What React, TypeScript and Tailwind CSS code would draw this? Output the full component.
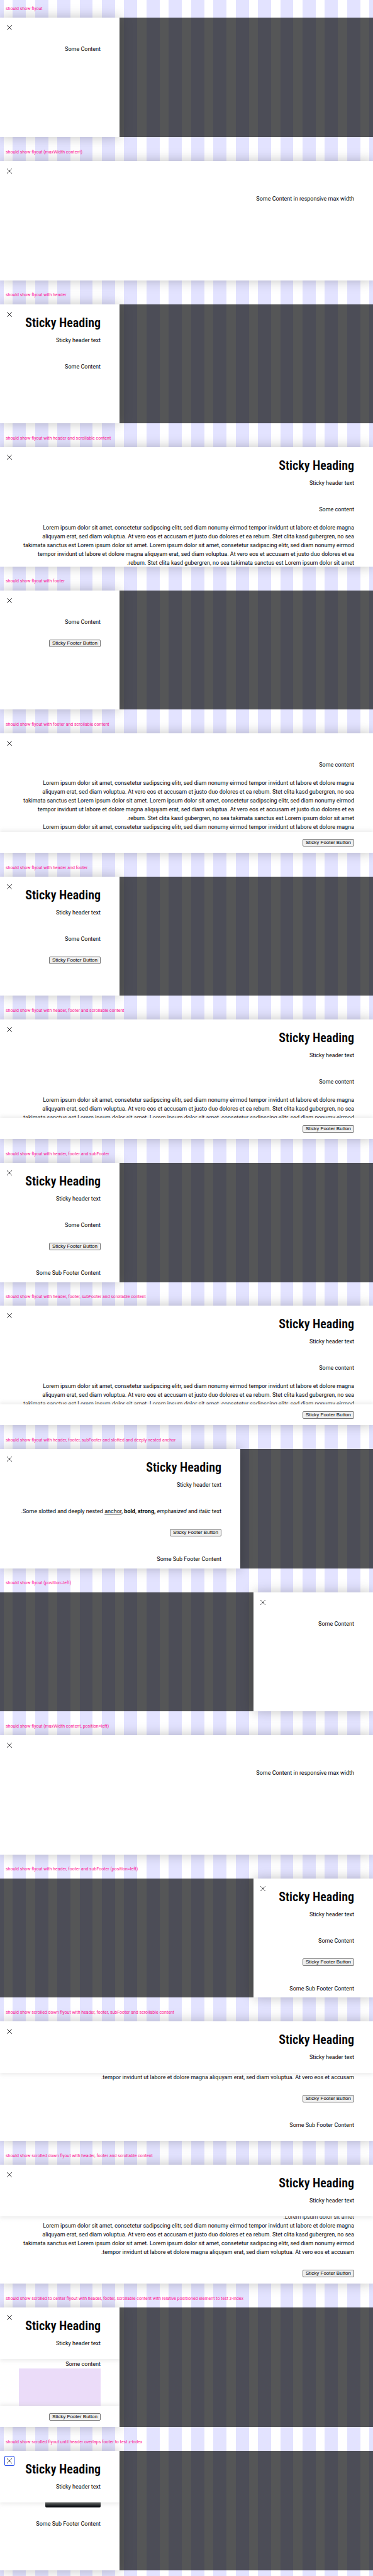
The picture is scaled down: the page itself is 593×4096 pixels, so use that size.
import type { ReactNode } from "react";
import clsx from "clsx";

type FlyoutProps = {
  label: string;
  size?: "default" | "fit" | "max";
  position?: "start" | "end";
  focused?: boolean;
  children: ReactNode;
};

function Flyout({ label, size = "default", position = "end", focused = false, children }: FlyoutProps) {
  return (
    <section className="flex min-h-[227px] flex-col">
      <h2 className="flex min-h-0 grow-[3] basis-0 items-center px-[9px] text-[7px] leading-[8px] whitespace-nowrap text-[#ff1493]">
        {label}
      </h2>
      <div
        dir="rtl"
        className={clsx(
          "flex min-h-0 grow-[20] basis-0 bg-[#020304]/67",
          position === "end" ? "justify-end" : "justify-start",
        )}
      >
        <div
          role="dialog"
          aria-label={label}
          className={clsx(
            "relative flex flex-col overflow-hidden bg-white text-[9px] leading-[14px] text-[#010205] shadow-[0_0_18px_rgba(0,0,0,0.25)]",
            size === "default" && "w-[190px]",
            size === "fit" && "w-fit max-w-full min-w-[382px]",
            size === "max" && "w-full",
          )}
        >
          <button
            type="button"
            aria-label="Close"
            className={clsx(
              "absolute top-2 left-[7px] z-20 flex size-4 items-center justify-center rounded-[2px] border",
              focused ? "border-[#1a44ea]" : "border-transparent",
            )}
          >
            <svg viewBox="0 0 14 14" className="size-2 shrink-0" fill="none" stroke="#010205" strokeWidth="1.3">
              <path d="M0.2 0.2 13.8 13.8M13.8 0.2 0.2 13.8" />
            </svg>
          </button>
          {children}
        </div>
      </div>
      <div className="grow basis-0" />
    </section>
  );
}

function Header({ stuck = false }: { stuck?: boolean }) {
  return (
    <header
      className={clsx(
        "relative z-10 shrink-0 bg-white px-[30px] pt-[17px] pb-[18px]",
        stuck && "shadow-[0_3px_6px_rgba(204,204,204,0.35)]",
      )}
    >
      <h3 className="font-['Roboto_Condensed',Roboto,sans-serif] text-[20px] leading-6 font-semibold">Sticky Heading</h3>
      <p className="mt-[9px]">Sticky header text</p>
    </header>
  );
}

function Body({ headless = false, children }: { headless?: boolean; children: ReactNode }) {
  return <div className={clsx("shrink-0 px-[30px] pb-[10px]", headless ? "pt-[43px]" : "pt-[10px]")}>{children}</div>;
}

function Viewport({ atEnd = false, children }: { atEnd?: boolean; children: ReactNode }) {
  return (
    <div className={clsx("flex min-h-0 grow basis-0 flex-col overflow-hidden", atEnd && "justify-end")}>{children}</div>
  );
}

function Footer({ stuck = false }: { stuck?: boolean }) {
  return (
    <footer
      className={clsx(
        "relative z-10 flex shrink-0 bg-white px-[30px] pt-[11px] pb-[10px]",
        stuck && "shadow-[0_-3px_6px_rgba(204,204,204,0.35)]",
      )}
    >
      <button
        type="button"
        className="flex h-3 items-center rounded-[2px] border border-[#767676] bg-[#efefef] px-1 font-['Liberation_Sans',sans-serif] text-[8px] leading-[10px] whitespace-nowrap text-black"
      >
        Sticky Footer Button
      </button>
    </footer>
  );
}

function EmptyFooter() {
  return <div className="relative z-10 h-0 shrink-0 shadow-[0_-1px_6px_rgba(160,160,160,0.5)]" />;
}

function SubFooter() {
  return <div className="shrink-0 px-[30px] pt-[19px] pb-[18px]">Some Sub Footer Content</div>;
}

function Lines({ lines }: { lines: string[] }) {
  return (
    <>
      {lines.map((line) => (
        <span key={line} className="block whitespace-nowrap">
          {line}
        </span>
      ))}
    </>
  );
}

const opening = [
  "Lorem ipsum dolor sit amet, consetetur sadipscing elitr, sed diam nonumy eirmod tempor invidunt ut labore et dolore magna",
  "aliquyam erat, sed diam voluptua. At vero eos et accusam et justo duo dolores et ea rebum. Stet clita kasd gubergren, no sea",
  "takimata sanctus est Lorem ipsum dolor sit amet. Lorem ipsum dolor sit amet, consetetur sadipscing elitr, sed diam nonumy eirmod",
];

const paragraph = [
  ...opening,
  "tempor invidunt ut labore et dolore magna aliquyam erat, sed diam voluptua. At vero eos et accusam et justo duo dolores et ea",
  "rebum. Stet clita kasd gubergren, no sea takimata sanctus est Lorem ipsum dolor sit amet.",
];

const closing = [...opening, "tempor invidunt ut labore et dolore magna aliquyam erat, sed diam voluptua. At vero eos et accusam."];

function LongContent({ paragraphs }: { paragraphs: string[][] }) {
  return (
    <>
      <p className="mb-[15px]">Some content</p>
      {paragraphs.map((lines, index) => (
        <p key={index}>
          <Lines lines={lines} />
        </p>
      ))}
    </>
  );
}

function ClosingContent() {
  return (
    <p>
      <Lines lines={["Lorem ipsum dolor sit amet."]} />
      <Lines lines={closing} />
    </p>
  );
}

function MaxWidthContent() {
  return (
    <>
      <Viewport>
        <Body headless>
          <p className="pt-[10px]">Some Content in responsive max width</p>
        </Body>
      </Viewport>
      <EmptyFooter />
    </>
  );
}

export default function App() {
  return (
    <main className="grid min-h-screen auto-rows-fr overflow-hidden bg-white bg-[repeating-linear-gradient(to_right,#e3e3ff_0,#e3e3ff_0.95%,#ffffff_0.95%,#ffffff_3.4%,#e3e3ff_3.4%,#e3e3ff_5.978%)] font-[Roboto,sans-serif]">
      <Flyout label="should show flyout">
        <Body headless>Some Content</Body>
      </Flyout>

      <Flyout label="should show flyout (maxWidth content)" size="max">
        <MaxWidthContent />
      </Flyout>

      <Flyout label="should show flyout with header">
        <Header />
        <Body>Some Content</Body>
      </Flyout>

      <Flyout label="should show flyout with header and scrollable content" size="max">
        <Header />
        <Viewport>
          <Body>
            <LongContent paragraphs={[paragraph]} />
          </Body>
        </Viewport>
        <EmptyFooter />
      </Flyout>

      <Flyout label="should show flyout with footer">
        <Body headless>Some Content</Body>
        <Footer />
      </Flyout>

      <Flyout label="should show flyout with footer and scrollable content" size="max">
        <Viewport>
          <Body headless>
            <LongContent paragraphs={[paragraph, opening.slice(0, 1)]} />
          </Body>
        </Viewport>
        <Footer stuck />
      </Flyout>

      <Flyout label="should show flyout with header and footer">
        <Header />
        <Body>Some Content</Body>
        <Footer />
      </Flyout>

      <Flyout label="should show flyout with header, footer and scrollable content" size="max">
        <Header />
        <Viewport>
          <Body>
            <LongContent paragraphs={[opening]} />
          </Body>
        </Viewport>
        <Footer stuck />
      </Flyout>

      <Flyout label="should show flyout with header, footer and subFooter">
        <Header />
        <Body>Some Content</Body>
        <Footer />
        <SubFooter />
      </Flyout>

      <Flyout label="should show flyout with header, footer, subFooter and scrollable content" size="max">
        <Header />
        <Viewport>
          <Body>
            <LongContent paragraphs={[opening]} />
          </Body>
        </Viewport>
        <Footer stuck />
      </Flyout>

      <Flyout
        label="should show flyout with header, footer, subFooter and slotted and deeply nested anchor"
        size="fit"
      >
        <Header />
        <Body>
          <p className="whitespace-nowrap">
            Some slotted and deeply nested{" "}
            <a href="#" className="underline">
              anchor
            </a>
            , <b>bold</b>, <strong>strong,</strong> <em>emphasized</em> and <i>italic</i> text.
          </p>
        </Body>
        <Footer />
        <SubFooter />
      </Flyout>

      <Flyout label="should show flyout (position=left)" position="start">
        <Body headless>Some Content</Body>
      </Flyout>

      <Flyout label="should show flyout (maxWidth content, position=left)" size="max" position="start">
        <MaxWidthContent />
      </Flyout>

      <Flyout label="should show flyout with header, footer and subFooter (position=left)" position="start">
        <Header />
        <Body>Some Content</Body>
        <Footer />
        <SubFooter />
      </Flyout>

      <Flyout
        label="should show scrolled down flyout with header, footer, subFooter and scrollable content"
        size="max"
      >
        <Header stuck />
        <Viewport atEnd>
          <Body>
            <p>
              <Lines lines={closing.slice(-1)} />
            </p>
          </Body>
          <Footer />
          <SubFooter />
        </Viewport>
      </Flyout>

      <Flyout label="should show scrolled down flyout with header, footer and scrollable content" size="max">
        <Header stuck />
        <Viewport atEnd>
          <Body>
            <ClosingContent />
          </Body>
        </Viewport>
        <Footer />
      </Flyout>

      <Flyout label="should show scrolled to center flyout with header, footer, scrollable content with relative positioned element to test z-index">
        <Header stuck />
        <div className="flex min-h-0 grow basis-0 flex-col px-[30px] pt-px">
          <p>Some content</p>
          <div className="grow bg-[#ebdcf9]" />
        </div>
        <Footer stuck />
      </Flyout>

      <Flyout label="should show scrolled flyout until header overlaps footer to test z-index" focused>
        <Header stuck />
        <div className="flex px-[30px]">
          <div className="h-2 w-[88px] rounded-b-[2px] bg-linear-to-b from-[#3a3d3c] to-[#010205]" />
        </div>
        <SubFooter />
      </Flyout>
    </main>
  );
}
